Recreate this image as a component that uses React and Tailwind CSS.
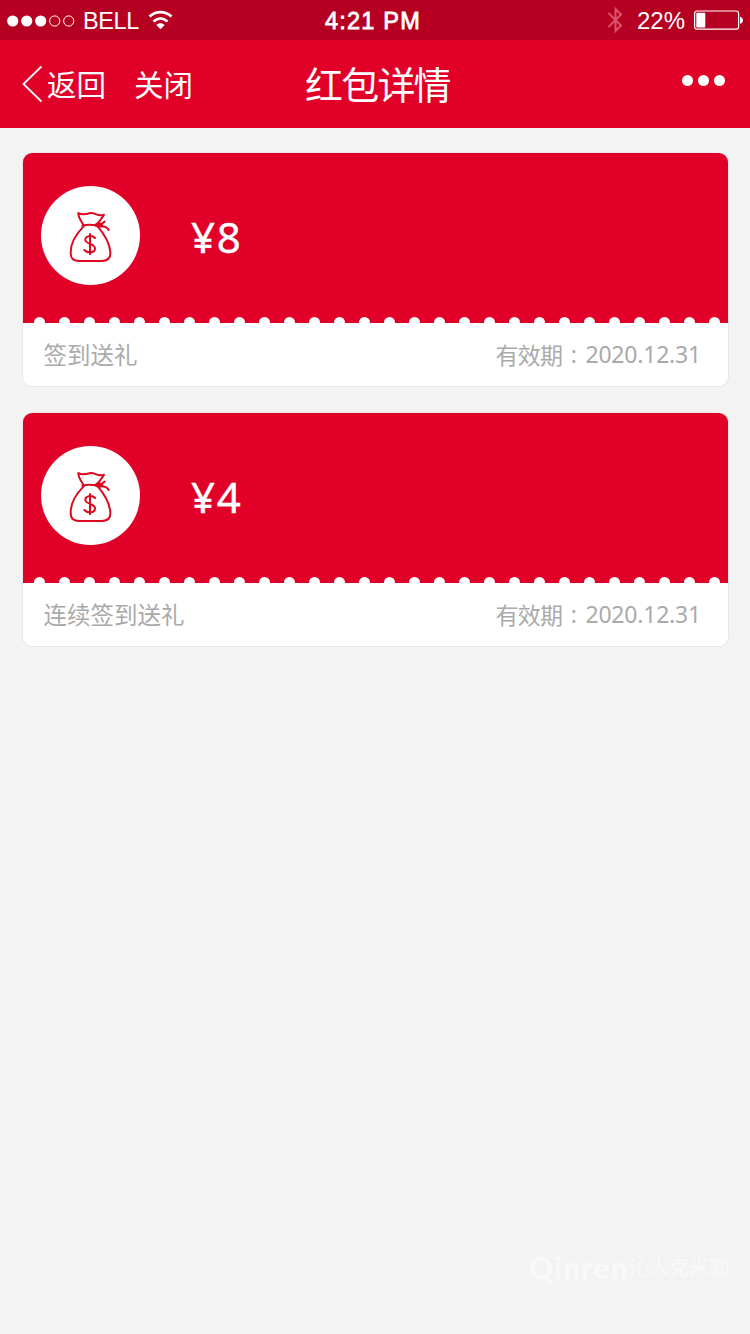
const packets = [
  { id: 1, amount: '8', title: '签到送礼', expires: '2020.12.31' },
  { id: 2, amount: '4', title: '连续签到送礼', expires: '2020.12.31' },
];

const notches = Array.from({ length: 28 }, (_, i) => i);

function StatusBar() {
  return (
    <div className="relative flex h-10 items-center justify-between bg-[#b50022] px-[7px] font-['Liberation_Sans',sans-serif] text-[24px] leading-10 text-white">
      <div className="flex items-center">
        <svg className="mt-px" width="68" height="12" viewBox="0 0 68 12" fill="white">
          <circle cx="5.7" cy="6" r="5.6" />
          <circle cx="19.7" cy="6" r="5.6" />
          <circle cx="33.7" cy="6" r="5.6" />
          <circle cx="47.7" cy="6" r="5.1" fill="none" stroke="white" />
          <circle cx="61.7" cy="6" r="5.1" fill="none" stroke="white" />
        </svg>
        <span className="ml-[8px] mt-[2px] w-[57px] text-[23.5px] tracking-[-0.4px]">BELL</span>
        <svg className="ml-[8px]" width="25" height="20" viewBox="0 0 25 20">
          <path d="M1.5 6.5C8 .7 17 .7 23.5 6.5" fill="none" stroke="white" strokeWidth="2.8" />
          <path d="M5.5 11.5C10 7.5 15 7.5 19.5 11.5" fill="none" stroke="white" strokeWidth="2.8" />
          <path d="M8.3 15C11 12.8 14 12.8 16.7 15L12.5 19.2Z" fill="white" />
        </svg>
      </div>
      <span className="absolute left-[325px] top-[1px] text-[23.5px] tracking-[1.2px] [-webkit-text-stroke:0.8px_white]">4:21 PM</span>
      <div className="flex items-center">
        <svg width="16" height="28" viewBox="0 0 16 28" fill="none" stroke="#da526c" strokeWidth="2">
          <path d="M1.5 7L14 19.5L8.5 25V3L14 8.5L1.5 21" />
        </svg>
        <span className="ml-[14px] mt-[2px] w-[49px] text-[24px]">22%</span>
        <svg className="ml-[8px]" width="49" height="20" viewBox="0 0 49 20">
          <rect x=".6" y="1" width="44" height="18.2" rx="2.5" fill="none" stroke="white" strokeWidth="1.2" />
          <rect x="2.3" y="2.7" width="9" height="14.8" rx="1" fill="white" />
          <path d="M46 6.7C50 7.7 50 12.7 46 13.7Z" fill="white" />
        </svg>
      </div>
    </div>
  );
}

function NavBar() {
  return (
    <header className="relative flex h-[88px] items-center justify-between bg-[#e10028] pl-[22px] pr-[25px] text-white">
      <div className="flex items-center text-[29.5px]">
        <svg width="20" height="38" viewBox="0 0 20 38" fill="none" stroke="white" strokeWidth="1.8">
          <path d="M19.5 1.5L1.5 19L19.5 36.5" />
        </svg>
        <span className="mb-[2px] ml-[5px]">返回</span>
        <span className="mb-[2px] ml-[28px]">关闭</span>
      </div>
      <h1 className="absolute left-[305px] top-[16px] text-[38px] leading-[54px] tracking-[-1.8px]">红包详情</h1>
      <div className="mb-[7px] flex gap-[5px]">
        <span className="size-[11px] rounded-full bg-white" />
        <span className="size-[11px] rounded-full bg-white" />
        <span className="size-[11px] rounded-full bg-white" />
      </div>
    </header>
  );
}

function MoneyBag() {
  return (
    <svg className="mr-[2px]" width="60" height="70" viewBox="0 0 180 210" fill="none" stroke="#dc0a20" strokeWidth="6" strokeLinecap="round" strokeLinejoin="round">
      <path d="M70 72C64 60 55 51 55 36C66 44 82 39 92 36C106 35 114 48 132 41C128 51 118 59 111 70" />
      <path d="M67 74C78 71 96 71 107 73" />
      <path d="M71 76C56 91 32 120 32 154C32 174 39 179 58 180H126C145 179 152 170 151 153C148 120 126 91 113 76" />
      <path d="M105 72C113 65 124 65 127 74C120 79 110 77 105 72Z" fill="#dc0a20" />
      <path d="M118 74L134 62M121 76C136 76 143 80 146 87" />
      <path d="M105 111C96 100 75 105 76 117C77 130 106 127 105 143C104 157 82 157 73 147M90 99V160" />
    </svg>
  );
}

function PacketCard({ amount, title, expires }) {
  return (
    <article className="h-[233px] overflow-hidden rounded-[9px] bg-white shadow-[0_0_0_1px_#e8e8e8]">
      <div className="flex h-[170px] flex-col justify-between bg-[#e10028]">
        <div className="flex items-center pl-[18px] pt-[33px]">
          <div className="flex size-[99px] items-center justify-center rounded-full bg-white">
            <MoneyBag />
          </div>
          <span className="ml-[51px] mt-[3px] font-['Noto_Sans',sans-serif] text-[42px] leading-none tracking-[1.7px] text-white [-webkit-text-stroke:0.4px_white]">
            ¥{amount}
          </span>
        </div>
        <div className="flex gap-[14px] pl-[11px]">
          {notches.map(i => (
            <span key={i} className="h-[6px] w-[11px] shrink-0 rounded-t-full bg-white" />
          ))}
        </div>
      </div>
      <div className="flex h-[63px] items-center justify-between pl-[20.5px] pr-[27px] text-[23.5px] text-[#aaa]">
        <span>{title}</span>
        <span className="flex items-center text-[23px]">
          <span className="tracking-[-0.7px]">有效期</span>
          <span className="w-[23px] text-center font-['Noto_Sans',sans-serif]">:</span>
          <span className="font-['Noto_Sans',sans-serif] tracking-[-0.2px]">{expires}</span>
        </span>
      </div>
    </article>
  );
}

export default function App() {
  return (
    <div className="flex h-[1334px] w-[750px] flex-col overflow-hidden bg-[#f3f3f3] font-['Noto_Sans_CJK_SC',sans-serif]">
      <StatusBar />
      <NavBar />
      <main className="flex flex-col gap-[27px] pl-[23px] pr-[22px] pt-[25px]">
        {packets.map(packet => (
          <PacketCard key={packet.id} {...packet} />
        ))}
      </main>
      <footer className="mb-[7px] mr-[21px] mt-auto flex flex-col items-end text-[#f9f9f9]">
        <div className="flex items-center">
          <span className="font-['Lato',sans-serif] text-[30px] font-black leading-[36px] tracking-[1.2px]">Qinren</span>
          <span className="text-[20px] leading-[30px]">沁人克米勒</span>
        </div>
        <span className="text-[11px] leading-[17px] tracking-[3.5px] text-[#f5f5f5]">专业一站式互联网品牌营销服务</span>
        <span className="font-['Liberation_Sans',sans-serif] text-[21px] leading-[25px] tracking-[1.5px] text-[#f5f5f5]">400-8188-011</span>
      </footer>
    </div>
  );
}
